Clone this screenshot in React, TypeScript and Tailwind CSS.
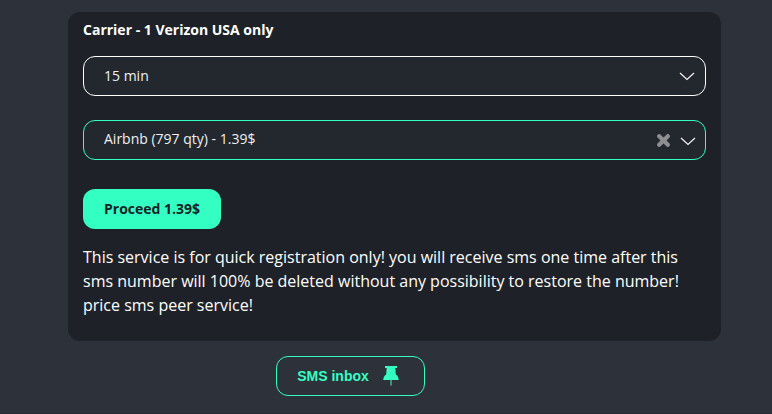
import { useState } from "react";

function Chevron({className = ""}) {
    return (
        <svg className={"pointer-events-none absolute " + className} width="16" height="9" viewBox="0 0 16 9" fill="none" aria-hidden="true">
            <path d="M1 1L8 7.4L15 1" stroke="#f4f4f4" strokeWidth="1.2" />
        </svg>
    );
}

function Pin() {
    return (
        <svg width="16" height="20" viewBox="0 0 16 20" aria-hidden="true">
            <path d="M2 0H14V2H12.3L12.8 8.6C14.4 9.6 15.5 11.2 15.8 14H0.2C0.5 11.2 1.6 9.6 3.2 8.6L3.7 2H2Z" fill="#33ffc2" />
            <path d="M7 14H9V19L8 20L7 19Z" fill="#2f9b80" />
        </svg>
    );
}

export default function App() {
    const [service, setService] = useState("airbnb");

    return (
        <div className="min-h-screen flex flex-col bg-[#2d3139] font-['Open_Sans',sans-serif] text-white">
            <main className="grow flex flex-col items-center pt-3 pl-[68px] pr-[51px] pb-4">
                <form className="w-full rounded-xl bg-[#1e2228] px-[15px] pt-2 pb-6" onSubmit={(e) => e.preventDefault()}>
                    <label htmlFor="period" className="block text-sm font-bold">Carrier - 1 Verizon USA only</label>
                    <div className="relative mt-4">
                        <select id="period" className="block w-full h-10 appearance-none rounded-xl border border-white bg-[#23272e] px-5 pr-12 text-sm text-[#f0f0f0]">
                            <option>15 min</option>
                        </select>
                        <Chevron className="right-[11px] top-4" />
                    </div>
                    <div className="relative mt-6">
                        <select
                            aria-label="Service"
                            value={service}
                            onChange={(e) => setService(e.target.value)}
                            className="block w-full h-10 appearance-none rounded-xl border border-[#33ffc2] bg-[#23272e] px-5 pr-16 pb-0.5 text-sm text-[#f0f0f0]"
                        >
                            <option value=""></option>
                            <option value="airbnb">Airbnb (797 qty) - 1.39$</option>
                        </select>
                        <button type="button" aria-label="Clear service" onClick={() => setService("")} className="absolute right-9 top-3.5">
                            <svg width="13" height="13" viewBox="0 0 13 13" aria-hidden="true">
                                <path d="M2.2 2.2L10.8 10.8M10.8 2.2L2.2 10.8" stroke="#8c8e91" strokeWidth="4.2" strokeLinecap="round" />
                            </svg>
                        </button>
                        <Chevron className="right-2.5 top-[17px]" />
                    </div>
                    <button type="submit" className="mt-[29px] block h-10 rounded-xl bg-[#33ffc2] px-[21px] text-sm font-bold text-[#12232b]">
                        Proceed 1.39$
                    </button>
                    <p className="mt-4 text-base">
                        This service is for quick registration only! you will receive sms one time after this sms number will 100% be deleted without any possibility to restore the number! price sms peer service!
                    </p>
                </form>
                <button type="button" className="mt-[15px] mr-[88px] flex h-10 items-center gap-[14px] rounded-xl border border-[#33ffc2] pl-5 pr-[25px] font-['Liberation_Sans',sans-serif] text-sm font-bold text-[#33ffc2]">
                    SMS inbox
                    <Pin />
                </button>
            </main>
            <div className="h-px bg-[#292a33]"></div>
        </div>
    );
}
